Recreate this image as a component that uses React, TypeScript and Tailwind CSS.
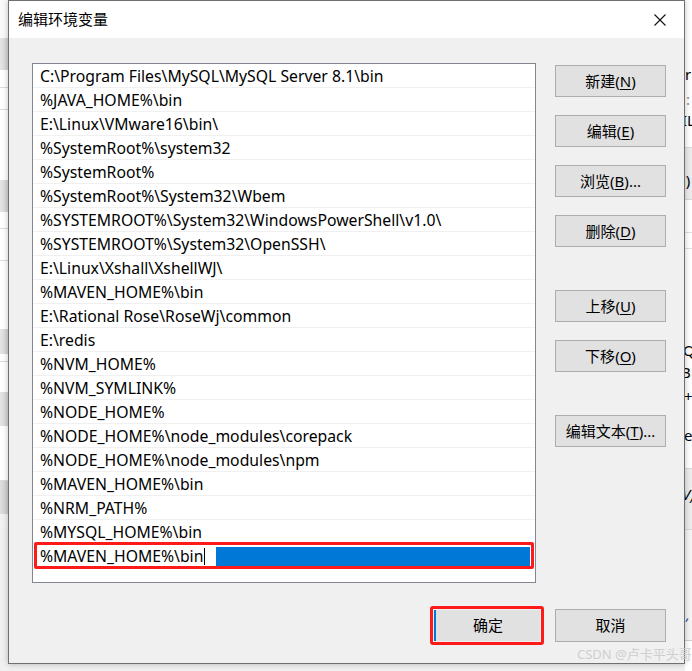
import React from "react";

const rows = [
  "C:\\Program Files\\MySQL\\MySQL Server 8.1\\bin",
  "%JAVA_HOME%\\bin",
  "E:\\Linux\\VMware16\\bin\\",
  "%SystemRoot%\\system32",
  "%SystemRoot%",
  "%SystemRoot%\\System32\\Wbem",
  "%SYSTEMROOT%\\System32\\WindowsPowerShell\\v1.0\\",
  "%SYSTEMROOT%\\System32\\OpenSSH\\",
  "E:\\Linux\\Xshall\\XshellWJ\\",
  "%MAVEN_HOME%\\bin",
  "E:\\Rational Rose\\RoseWj\\common",
  "E:\\redis",
  "%NVM_HOME%",
  "%NVM_SYMLINK%",
  "%NODE_HOME%",
  "%NODE_HOME%\\node_modules\\corepack",
  "%NODE_HOME%\\node_modules\\npm",
  "%MAVEN_HOME%\\bin",
  "%NRM_PATH%",
  "%MYSQL_HOME%\\bin",
];

const font = {
  fontFamily: '"Noto Sans", "Noto Sans CJK SC", sans-serif',
};

function Btn({
  label,
  k,
  tail = "",
  className = "",
}: {
  label: string;
  k: string;
  tail?: string;
  className?: string;
}) {
  return (
    <div
      className={
        "flex h-[32px] w-[111px] items-center justify-center border border-[#adadad] bg-[#e1e1e1] text-[15px] text-black " +
        className
      }
    >
      <span>
        {label}(<span className="underline underline-offset-2">{k}</span>){tail}
      </span>
    </div>
  );
}

function Backdrop() {
  return (
    <div className="absolute inset-0 bg-[#f0f0f0]">
      {/* window behind, left edge */}
      <div className="absolute left-0 top-0 flex h-[671px] w-[10px] flex-col">
        <div className="h-[38px] bg-[#fafafa]" />
        <div className="h-[32px] bg-gradient-to-r from-[#e6e6e6] to-[#cfcfcf]" />
        <div className="h-[18px] border-b border-[#dcdcdc] bg-white" />
        <div className="h-[22px] border-b border-[#dcdcdc] bg-white" />
        <div className="h-[70px] bg-white" />
        <div className="h-[32px] bg-gradient-to-r from-[#e6e6e6] to-[#cfcfcf]" />
        <div className="h-[17px] border-b border-[#dcdcdc] bg-white" />
        <div className="h-[32px] border-b border-[#dcdcdc] bg-white" />
        <div className="h-[68px] bg-white" />
        <div className="h-[25px] bg-gradient-to-r from-[#e6e6e6] to-[#cfcfcf]" />
        <div className="h-[8px] border-b border-[#dcdcdc] bg-white" />
        <div className="h-[30px] bg-white" />
        <div className="h-[34px] bg-gradient-to-r from-[#e6e6e6] to-[#cfcfcf]" />
        <div className="h-[55px] border-b border-[#dcdcdc] bg-white" />
        <div className="h-[33px] bg-gradient-to-r from-[#e0e0e0] to-[#c8c8c8]" />
        <div className="h-[15px] bg-[#f2f2f2]" />
        <div className="flex-1 bg-[#f0f0f0]" />
      </div>
      {/* window behind, right edge */}
      <div
        className="absolute left-[685px] top-0 h-[671px] w-[7px] overflow-hidden bg-white text-[15px] leading-none text-black"
        style={font}
      >
        <div className="absolute left-[0px] top-[67px]">ri</div>
        <div className="absolute left-[1px] top-[92px] text-[#888]">:</div>
        <div className="absolute left-[-3px] top-[113px]">IL</div>
        <div className="absolute left-0 top-[147px] h-[53px] w-full border-y border-[#d8d8d8] bg-[#ececec]" />
        <div className="absolute left-[-3px] top-[173px]">l)</div>
        <div className="absolute left-0 top-[232px] h-px w-full bg-[#e0e0e0]" />
        <div className="absolute left-0 top-[248px] h-px w-full bg-[#e0e0e0]" />
        <div className="absolute left-[-2px] top-[343px]">Q</div>
        <div className="absolute left-[-4px] top-[365px]">BE</div>
        <div className="absolute left-[-1px] top-[389px]">+</div>
        <div className="absolute left-[-1px] top-[428px]">e</div>
        <div className="absolute left-0 top-[468px] h-[62px] w-full border-y border-[#d8d8d8] bg-[#ececec]" />
        <div className="absolute left-[-3px] top-[487px] italic">V)</div>
        <div className="absolute left-0 top-[530px] h-[110px] w-full bg-[#f4f4f4]" />
        <div className="absolute left-[1px] top-[607px] italic text-[#2a5caa]">,</div>
        <div className="absolute left-0 top-[640px] h-px w-full bg-[#d0d0d0]" />
      </div>
    </div>
  );
}

export default function App() {
  return (
    <div
      className="relative h-[671px] w-[692px] overflow-hidden text-black"
      style={font}
    >
      <Backdrop />

      {/* dialog window */}
      <div className="absolute left-[8px] top-0 flex h-[664px] w-[677px] flex-col border border-[#707070] bg-[#f0f0f0] shadow-[0_0_6px_rgba(0,0,0,0.25)]">
        {/* title bar */}
        <div className="flex h-[37px] shrink-0 items-center justify-between bg-white pl-[9px] pr-[15px]">
          <span className="text-[15px]">编辑环境变量</span>
          <svg width="16" height="16" viewBox="0 0 16 16" className="mr-[1px]">
            <path d="M2.5 2.5 L13.5 13.5 M13.5 2.5 L2.5 13.5" stroke="#111" strokeWidth="1.1" />
          </svg>
        </div>

        {/* body */}
        <div className="flex flex-1 flex-col pl-[23px] pt-[25px]">
          <div className="flex gap-[19px]">
            {/* path list */}
            <div className="h-[520px] w-[504px] border border-[#828790] bg-white">
              {rows.map((r, i) => (
                <div
                  key={i}
                  className="flex h-[24px] items-center border-b border-[#f0f0f0] pl-[7px] pt-[2px] text-[15.75px] leading-none whitespace-nowrap"
                >
                  {r}
                </div>
              ))}
              {/* row being edited */}
              <div className="relative flex h-[24px] items-center pl-[4px] pr-[5px]">
                <div className="flex h-[20px] flex-1 items-center bg-white pl-[3px] pt-[1px] text-[15.75px] leading-none whitespace-nowrap">
                  <span>%MAVEN_HOME%\bin</span>
                  <span className="ml-[1px] h-[17px] w-px bg-black" />
                  <span className="ml-[11px] h-[19px] flex-1 bg-[#0078d7]" />
                </div>
                <div className="pointer-events-none absolute -top-[2px] bottom-[-1px] left-[1px] right-[1px] rounded-[2px] border-[3px] border-[#ff1a1a]" />
              </div>
            </div>

            {/* side buttons */}
            <div className="flex flex-col pt-[2px]">
              <Btn label="新建" k="N" />
              <Btn label="编辑" k="E" className="mt-[18px]" />
              <Btn label="浏览" k="B" tail="..." className="mt-[18px]" />
              <Btn label="删除" k="D" className="mt-[18px]" />
              <Btn label="上移" k="U" className="mt-[43px]" />
              <Btn label="下移" k="O" className="mt-[18px]" />
              <Btn label="编辑文本" k="T" tail="..." className="mt-[43px]" />
            </div>
          </div>

          {/* OK / Cancel */}
          <div className="mt-[23px] flex items-center pl-[398px]">
            <div className="rounded-[3px] border-[3px] border-[#ff1a1a] p-[1px]">
              <div className="flex h-[31px] w-[106px] items-center justify-center border-l-2 border-[#0078d7] bg-[#e1e1e1] text-[15px]">
                确定
              </div>
            </div>
            <div className="ml-[11px] flex h-[33px] w-[111px] items-center justify-center border border-[#adadad] bg-[#e1e1e1] text-[15px]">
              取消
            </div>
          </div>
        </div>
      </div>

      {/* watermark */}
      <div
        className="absolute left-[577px] top-[648px] text-[13px] leading-none text-[#cfcfcf]"
        style={{ fontFamily: '"Noto Sans", "Noto Sans CJK SC", sans-serif' }}
      >
        CSDN @卢卡平头哥
      </div>
    </div>
  );
}
